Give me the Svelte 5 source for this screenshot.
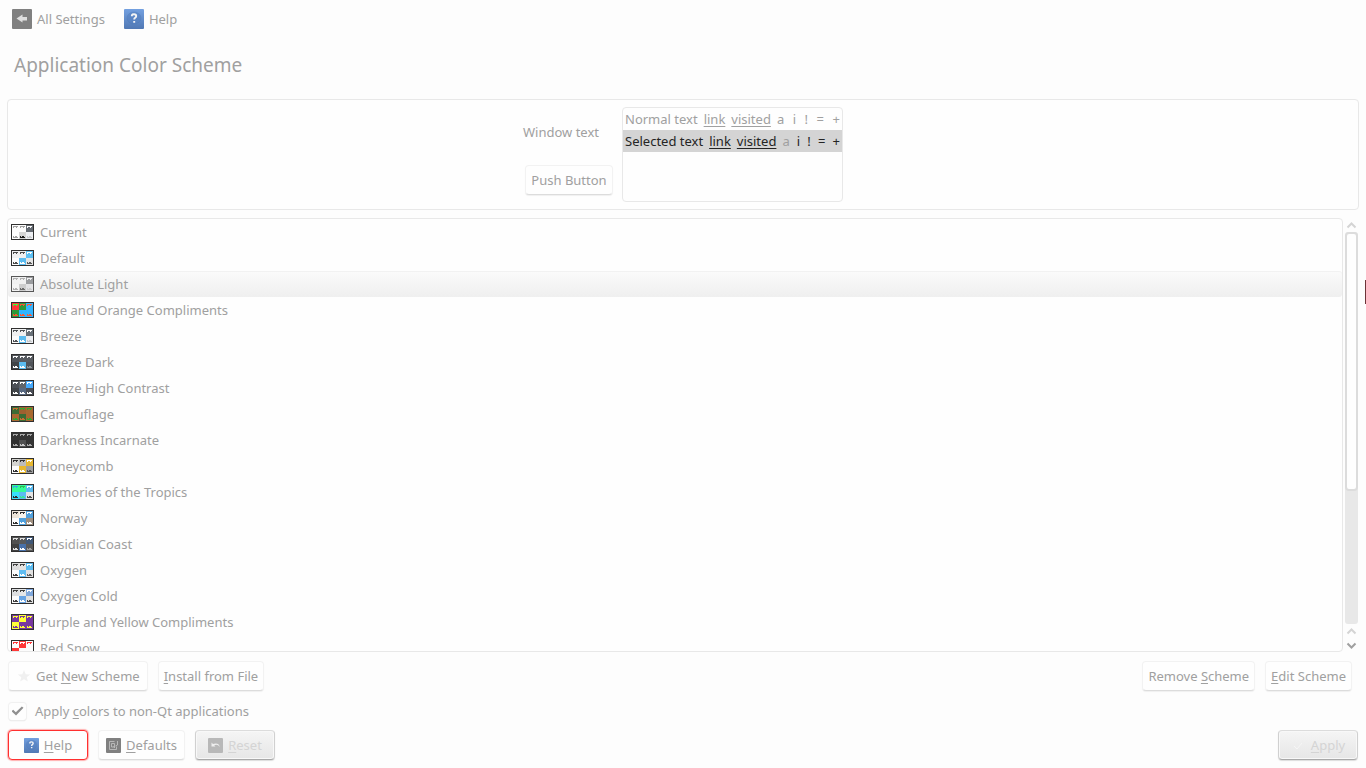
<script lang="ts">
  interface Scheme {
    name: string;
    // six cells, left to right and top to bottom
    fills: string[];
    inks: string[];
  }

  const schemes: Scheme[] = [
    { name: 'Current', fills: ['#fcfcfc', '#fcfcfc', '#646a72', '#fefefe', '#d4d4d4', '#eceef2'], inks: ['#a0a0a0', '#a0a0a0', '#fcfcfc', '#a0a0a0', '#1c1c1c', '#c8cacc'] },
    { name: 'Default', fills: ['#eff0f1', '#eff0f1', '#5cc0f4', '#fcfcfc', '#5cbcf0', '#e4e4e4'], inks: ['#4c4c4c', '#4c4c4c', '#ffffff', '#4c4c4c', '#ffffff', '#5a5a5a'] },
    { name: 'Absolute Light', fills: ['#f0f0f0', '#f0f0f0', '#84868a', '#f4f4f4', '#c4c4c4', '#e0e0e2'], inks: ['#a0a0a0', '#a0a0a0', '#f0f0f0', '#a0a0a0', '#484848', '#c4c4c4'] },
    { name: 'Blue and Orange Compliments', fills: ['#ff3838', '#2e9838', '#34b4ff', '#2e9838', '#34b4ff', '#34b4ff'], inks: ['#38ff38', '#ff5030', '#ff5a30', '#ff5030', '#ff5a30', '#ff5a30'] },
    { name: 'Breeze', fills: ['#eff0f1', '#eff0f1', '#687078', '#fcfcfc', '#5cbcf0', '#eceef2'], inks: ['#505458', '#505458', '#fcfcfc', '#505458', '#ffffff', '#c8cacc'] },
    { name: 'Breeze Dark', fills: ['#50545a', '#585c62', '#585c62', '#404448', '#5cbcf0', '#50545a'], inks: ['#fcfcfc', '#fcfcfc', '#fcfcfc', '#fcfcfc', '#fcfcfc', '#909496'] },
    { name: 'Breeze High Contrast', fills: ['#4c5056', '#60646a', '#44a8fc', '#404448', '#586880', '#4a4e56'], inks: ['#ffffff', '#ffffff', '#ffffff', '#ffffff', '#ffffff', '#ffffff'] },
    { name: 'Camouflage', fills: ['#3c6c34', '#a06030', '#a86830', '#a86830', '#3c6c34', '#a86830'], inks: ['#c87030', '#30a830', '#30a830', '#30a830', '#c87030', '#30a830'] },
    { name: 'Darkness Incarnate', fills: ['#343434', '#343434', '#343434', '#303030', '#505050', '#343434'], inks: ['#a8a8a8', '#a8a8a8', '#a8a8a8', '#a8a8a8', '#c8c8c8', '#a8a8a8'] },
    { name: 'Honeycomb', fills: ['#d4d4d0', '#bcbcbc', '#e8b830', '#fcfcfc', '#e8b830', '#a0a0a0'], inks: ['#303030', '#303030', '#ffffff', '#303030', '#ffffff', '#505050'] },
    { name: 'Memories of the Tropics', fills: ['#34fc98', '#34fc98', '#5cbcf0', '#38e0fc', '#5cbcf0', '#e4e4e4'], inks: ['#38a8f0', '#30b850', '#ffffff', '#303030', '#34e898', '#505050'] },
    { name: 'Norway', fills: ['#ece4d8', '#f8f4ec', '#50a0dc', '#fcfcfc', '#50a0dc', '#a09080'], inks: ['#303030', '#303030', '#ffffff', '#303030', '#ffffff', '#ffffff'] },
    { name: 'Obsidian Coast', fills: ['#505050', '#585a5c', '#405878', '#404040', '#4870a8', '#585858'], inks: ['#e0e0e0', '#e0e0e0', '#ffffff', '#e0e0e0', '#ffffff', '#a0a0a0'] },
    { name: 'Oxygen', fills: ['#dcdcdc', '#e4e2e0', '#5cbcf0', '#fcfcfc', '#60bcf0', '#e0e0e0'], inks: ['#404040', '#404040', '#ffffff', '#404040', '#ffffff', '#606060'] },
    { name: 'Oxygen Cold', fills: ['#dcdee0', '#e4e6e8', '#80a8dc', '#fcfcfc', '#68a4e4', '#e0e0e0'], inks: ['#404040', '#404040', '#ffffff', '#404040', '#ffffff', '#404040'] },
    { name: 'Purple and Yellow Compliments', fills: ['#7838a0', '#ffff38', '#7838a0', '#ffff38', '#7838a0', '#7838a0'], inks: ['#ffff38', '#7838a0', '#ffff38', '#7838a0', '#ffff38', '#ffff38'] },
    { name: 'Red Snow', fills: ['#fcfcfc', '#ff3838', '#fcfcfc', '#ff3838', '#fcfcfc', '#fcfcfc'], inks: ['#ff3838', '#ffffff', '#ff3838', '#ffffff', '#303030', '#ff3838'] }
  ];

  let selected = $state('Absolute Light');
  let nonQt = $state(true);
</script>

{#snippet helpIcon(size: number)}
  <svg width={size} height={size} viewBox="0 0 20 20" aria-hidden="true">
    <defs>
      <linearGradient id="help-blue" x1="0" y1="0" x2="0" y2="1">
        <stop offset="0" stop-color="#73a0e0" />
        <stop offset="1" stop-color="#5078b4" />
      </linearGradient>
    </defs>
    <rect width="20" height="20" rx="1" fill="url(#help-blue)" />
    <ellipse cx="10" cy="9" rx="7" ry="6" fill="#5580c0" stroke="#4c76b4" stroke-width=".6" opacity=".55" />
    <path d="M7.9 7.2V6.1Q8.3 5.2 10 5.2Q12.2 5.2 12.2 7Q12.2 8 11.1 8.7Q10.2 9.3 10.2 10.6M10.2 12v1.8" fill="none" stroke="#f4f4f4" stroke-width="1.9" />
  </svg>
{/snippet}

<div class="window">
  <nav class="toolbar">
    <button class="tool">
      <svg width="20" height="20" viewBox="0 0 20 20" aria-hidden="true">
        <rect width="20" height="20" rx="1" fill="#808080" />
        <path d="M4.500 9.500L10.500 5.500V8H15V11.500H10.500V13.500Z" fill="#dedede" />
      </svg>
      All Settings
    </button>
    <button class="tool">
      {@render helpIcon(20)}
      Help
    </button>
  </nav>

  <h1>Application Color Scheme</h1>

  <section class="preview">
    <div class="samples">
      <span class="window-text">Window text</span>
      <button class="button sample-button">Push Button</button>
    </div>
    <div class="view">
      {#each ['Normal text', 'Selected text'] as text, i}
        <div class="view-row" class:picked={i === 1}>
          <div class="words">
            <span>{text}</span>
            <a href="#link">link</a>
            <a href="#visited">visited</a>
            <span class="inactive">a</span>
          </div>
          <span>i</span>
          <span>!</span>
          <span>=</span>
          <span>+</span>
        </div>
      {/each}
    </div>
  </section>

  <div class="list-area">
    <ul class="schemes" aria-label="Color schemes">
      {#each schemes as scheme}
        <li>
          <button class="scheme" class:selected={selected === scheme.name} onclick={() => (selected = scheme.name)}>
            <svg class="swatch" width="23" height="16" viewBox="0 0 23 16" shape-rendering="crispEdges" aria-hidden="true">
              <rect width="23" height="16" fill="#303030" />
              {#each scheme.fills as fill, i}
                <g transform={`translate(${1 + (i % 3) * 7} ${i < 3 ? 1 : 8})`}>
                  <rect width="7" height="7" {fill} />
                  {#if i < 3}
                    <path d="M1 1h5v1H1zM1 2h1v1H1zM4 2h1v1H4z" fill={scheme.inks[i]} />
                  {:else}
                    <path d="M1 5h5v1H1zM1 4h1v1H1zM3 4h2v1H3z" fill={scheme.inks[i]} />
                  {/if}
                </g>
              {/each}
            </svg>
            {scheme.name}
          </button>
        </li>
      {/each}
    </ul>

    <div class="scrollbar">
      <button class="arrow faint" aria-label="Scroll up">
        <svg width="11" height="7" viewBox="0 0 11 7"><path d="M1.5 5.5l4-4 4 4" /></svg>
      </button>
      <div class="groove"><div class="handle"></div></div>
      <button class="arrow faint" aria-label="Page up">
        <svg width="11" height="7" viewBox="0 0 11 7"><path d="M1.5 5.5l4-4 4 4" /></svg>
      </button>
      <button class="arrow" aria-label="Scroll down">
        <svg width="11" height="7" viewBox="0 0 11 7"><path d="M1.5 1.5l4 4 4-4" /></svg>
      </button>
    </div>
  </div>

  <div class="actions scheme-actions">
    <button class="button with-star">
      <svg width="16" height="16" viewBox="0 0 16 16" aria-hidden="true">
        <path d="M8 2l1.7 4.2 4.5.3-3.5 2.8 1.2 4.3L8 11.2l-3.9 2.4 1.2-4.3L1.8 6.5l4.5-.3z" fill="#f0f0f0" />
      </svg>
      <span>Get <u>N</u>ew Scheme</span>
    </button>
    <button class="button"><span><u>I</u>nstall from File</span></button>
    <span class="spacer"></span>
    <button class="button"><span>Remove <u>S</u>cheme</span></button>
    <button class="button"><span><u>E</u>dit Scheme</span></button>
  </div>

  <label class="option">
    <input type="checkbox" bind:checked={nonQt} />
    <span>Apply <u>c</u>olors to non-Qt applications</span>
  </label>

  <div class="actions">
    <button class="button wide focused">
      {@render helpIcon(15)}
      <span><u>H</u>elp</span>
    </button>
    <button class="button defaults">
      <svg width="15" height="15" viewBox="0 0 15 15" aria-hidden="true">
        <rect width="15" height="15" rx="1" fill="#808080" />
        <path d="M8.5 3.5h-5v8h7v-3M5.5 5.5h3v3.5h-3zM7.5 8.5l1.5 1.5M11.5 3v4l-2 1" fill="none" stroke="#c4c4c4" stroke-width=".8" />
      </svg>
      <span><u>D</u>efaults</span>
    </button>
    <button class="button wide" disabled>
      <svg width="15" height="15" viewBox="0 0 15 15" aria-hidden="true">
        <rect width="15" height="15" rx="1" fill="#b8b8b8" />
        <path d="M3.5 4.5v4h4L6.2 7.3Q9.500 5.800 11.800 9Q10.800 4.200 5 6Z" fill="#eeeeee" />
      </svg>
      <span><u>R</u>eset</span>
    </button>
    <span class="spacer"></span>
    <button class="button wide" disabled>
      <svg width="15" height="15" viewBox="0 0 15 15" aria-hidden="true">
        <path d="M3 8l3 3 5-6" fill="none" stroke="#f6f6f6" />
      </svg>
      <span><u>A</u>pply</span>
    </button>
  </div>

  <div class="edge-mark"></div>
</div>

<style>
  :global(body) {
    background: #fdfdfd;
  }

  .window {
    position: relative;
    display: flex;
    flex-direction: column;
    box-sizing: border-box;
    height: 100vh;
    padding: 0 7px 8px;
    overflow: hidden;
    color: #a0a0a0;
    font-family: 'Noto Sans', sans-serif;
    font-size: 13px;
    line-height: 18px;
  }

  button {
    padding: 0;
    border: 0;
    background: none;
    color: inherit;
    font: inherit;
    white-space: nowrap;
  }

  svg {
    display: block;
    flex: none;
  }

  u,
  a {
    color: inherit;
    text-decoration: underline;
    text-decoration-thickness: 1px;
    text-underline-offset: 2px;
  }

  .toolbar {
    display: flex;
    flex: none;
    align-items: center;
    height: 38px;
    padding-left: 5px;
    gap: 19px;
  }

  .tool {
    display: flex;
    align-items: center;
    gap: 5px;
  }

  h1 {
    flex: none;
    margin: 0 0 7px;
    padding-left: 7px;
    font-size: 19px;
    font-weight: 400;
    line-height: 54px;
  }

  .preview {
    display: flex;
    flex: none;
    justify-content: center;
    gap: 9px;
    margin-bottom: 8px;
    padding: 7px;
    border: 1px solid #e8e8e8;
    border-radius: 4px;
    background: #fefefe;
  }

  .samples {
    display: flex;
    flex-direction: column;
    align-items: flex-end;
    justify-content: space-between;
    width: 90px;
    padding: 16px 0 7px;
    box-sizing: border-box;
  }

  .window-text {
    align-self: flex-start;
  }

  .view {
    box-sizing: border-box;
    width: 221px;
    height: 95px;
    border: 1px solid #e8e8e8;
    border-radius: 4px;
    background: #fefefe;
  }

  .view-row {
    display: flex;
    justify-content: space-between;
    padding: 0 2px;
    line-height: 22px;
  }

  .words {
    display: flex;
    gap: 6px;
  }

  .view-row.picked {
    background: #d4d4d4;
    color: #242424;
  }

  .picked .inactive {
    color: #a0a0a0;
  }

  .list-area {
    display: flex;
    flex: 1;
    gap: 2px;
    min-height: 0;
    margin-bottom: 9px;
  }

  .schemes {
    flex: 1;
    margin: 0;
    padding: 0;
    overflow: hidden;
    border: 1px solid #e8e8e8;
    border-radius: 4px;
    background: #fefefe;
    list-style: none;
  }

  .scheme {
    display: flex;
    align-items: center;
    box-sizing: border-box;
    width: 100%;
    height: 26px;
    padding: 0 3px;
    gap: 6px;
    text-align: left;
  }

  .scheme.selected {
    border-radius: 3px;
    background: linear-gradient(#fbfbfb, #efefef);
    box-shadow: inset 0 1px #f2f2f2;
  }

  .selected .swatch {
    opacity: 0.8;
  }

  .scrollbar {
    display: flex;
    flex-direction: column;
    width: 13px;
    margin-right: 1px;
  }

  .arrow {
    display: grid;
    flex: none;
    place-items: center;
    height: 14px;
  }

  .arrow path {
    fill: none;
    stroke: #a0a0a0;
    stroke-width: 2;
  }

  .arrow.faint path {
    stroke: #d4d4d4;
  }

  .groove {
    flex: 1;
    border-radius: 3px;
    background: #e8e8e8;
  }

  .handle {
    box-sizing: border-box;
    height: 66%;
    border: 2px solid #dcdcdc;
    border-radius: 4px;
    background: #fefefe;
  }

  .actions {
    display: flex;
    flex: none;
    gap: 10px;
    padding: 0 1px;
  }

  .scheme-actions {
    padding-right: 7px;
  }

  .spacer {
    flex: 1;
  }

  .button {
    display: flex;
    align-items: center;
    justify-content: center;
    box-sizing: border-box;
    height: 30px;
    padding: 0 5px;
    gap: 5px;
    border: 1px solid #f2f2f2;
    border-bottom-color: #dcdcdc;
    border-radius: 4px;
    background: #fefefe;
    box-shadow: 0 1px 1px #f0f0f0;
  }

  .sample-button {
    width: 88px;
  }

  .with-star {
    padding: 0 7px;
    gap: 4px;
  }

  .defaults {
    width: 87px;
  }

  .wide {
    width: 80px;
  }

  .button.focused {
    border-color: #ff3030;
    box-shadow: 0 0 1px 1px #ffb0b0;
  }

  .button:disabled {
    border-color: #dcdcdc #d0d0d0 #a8a8a8;
    background: linear-gradient(#f5f5f5, #e6e6e6);
    box-shadow: inset 0 0 0 1px #f8f8f8, 0 1px 1px #dcdcdc;
    color: #d4d4d4;
  }

  .option {
    display: flex;
    flex: none;
    align-items: center;
    align-self: flex-start;
    height: 22px;
    margin: 9px 0 8px;
    padding-left: 2px;
    gap: 9px;
  }

  .option input {
    appearance: none;
    display: grid;
    place-items: center;
    width: 17px;
    height: 17px;
    margin: 0;
    border-radius: 3px;
    background: #fefefe;
    box-shadow: 0 0 1px 1px #f0f0f0, 0 1px 1px #d4d4d4;
  }

  .option input:checked::before {
    content: '';
    width: 12px;
    height: 10px;
    background: #909090;
    clip-path: polygon(0 52%, 14% 38%, 36% 62%, 86% 4%, 100% 18%, 38% 96%);
  }

  /* sliver of the neighbouring window over the right edge */
  .edge-mark {
    position: absolute;
    top: 280px;
    right: 0;
    width: 1px;
    height: 24px;
    background: #6c3438;
  }
</style>
